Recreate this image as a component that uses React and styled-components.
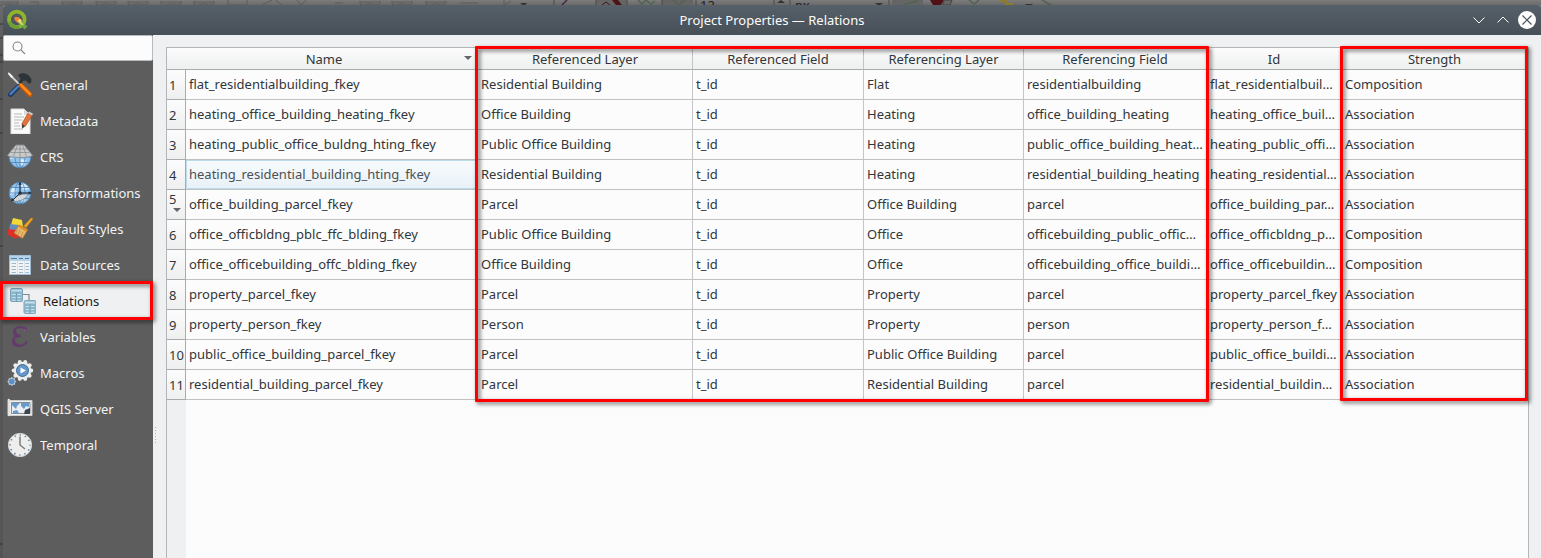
import React from "react";
import styled, { createGlobalStyle, css } from "styled-components";

const Global = createGlobalStyle`
  * { box-sizing: border-box; }
  html, body { margin: 0; height: 558px; overflow: hidden; }
  body { font: 13px/18px "Noto Sans", sans-serif; color: #31363b; background: #6f6f6f; }
`;

const Screen = styled.div`
  position: relative;
  width: 1541px;
  height: 558px;
  padding: 5px 0 0 3px;
  overflow: hidden;
  background: linear-gradient(#7c7c7c 0, #6a6a6a 5px, #555 60px, #555 558px);
`;
const Backdrop = styled.svg`
  position: absolute;
  left: 0;
  top: 0;
  width: 1541px;
  height: 558px;
`;
const Dialog = styled.div`
  position: relative;
  display: flex;
  flex-direction: column;
  height: 553px;
  border-radius: 3px 3px 0 0;
  overflow: hidden;
  background: #eff0f1;
`;
const TitleBar = styled.header`
  display: flex;
  align-items: center;
  flex: 0 0 30px;
  padding: 0 5px 0 3px;
  color: #fcfcfc;
  background: linear-gradient(#566069, #475057);
`;
const Title = styled.h1`
  flex: 1;
  margin: 0;
  padding-left: 46px;
  font-size: 13px;
  font-weight: 400;
  text-align: center;
`;
const WindowButtons = styled.div`
  display: flex;
  gap: 6px;
  svg { display: block; width: 18px; height: 18px; }
`;
const Body = styled.div`
  display: flex;
  flex: 1;
  min-height: 0;
`;
const Sidebar = styled.nav`
  flex: 0 0 150px;
  background: #5d5d5d;
`;
const Search = styled.div`
  height: 26px;
  padding: 5px 8px;
  border: 1px solid #b9babb;
  border-radius: 2px;
  background: #fcfcfc;
  svg { display: block; width: 14px; height: 14px; }
`;
const NavList = styled.ul`
  margin: 6px 0 0;
  padding: 0;
  list-style: none;
`;
const NavItem = styled.li`
  display: flex;
  align-items: center;
  gap: 7px;
  height: 36px;
  padding-left: 4px;
  color: #f2f2f2;
  svg { flex: none; width: 26px; height: 26px; }
  ${(p) => p.$active && css`
    padding-left: 7px;
    color: #1b1e20;
    background: #eff0f1;
  `}
`;
const Splitter = styled.div`
  display: flex;
  flex: 0 0 13px;
  align-items: flex-start;
  padding: 392px 0 0 2px;
  &::before {
    content: "";
    width: 1px;
    height: 17px;
    background: repeating-linear-gradient(#b0b1b2 0 1px, transparent 1px 3px);
  }
`;
const TableFrame = styled.main`
  flex: 0 0 1363px;
  margin-top: 12px;
  border: 1px solid #b4b5b6;
  border-bottom: 0;
  background: linear-gradient(90deg, #eff0f1 19px, #fcfcfc 19px);
`;
const Row = styled.div`
  display: grid;
  grid-template-columns: 19px 292px 215px 171px 160px 183px 135px 186px;
  height: ${(p) => (p.$head ? 22 : 30)}px;
`;
const HeadCell = styled.div`
  position: relative;
  padding: 2px ${(p) => (p.$sorted ? 15 : 0)}px 0 0;
  text-align: center;
  border-right: ${(p) => (p.$corner ? 0 : 1)}px solid #c3c4c5;
  border-bottom: 1px solid #aaabac;
  background: linear-gradient(#fcfcfc, #eeefef);
`;
const arrow = css`
  content: "";
  position: absolute;
  border: 4px solid transparent;
  border-top-color: #62666a;
  border-bottom: 0;
`;
const SortArrow = styled.span`
  ${arrow}
  right: 5px;
  top: 8px;
`;
const RowNumber = styled.div`
  position: relative;
  padding: ${(p) => (p.$open ? 0 : 6)}px 0 0 2px;
  border-right: 1px solid #aaabac;
  border-bottom: 1px solid #aaabac;
  background: linear-gradient(#fcfcfc, #eeefef);
  ${(p) => p.$open && css`
    &::after { ${arrow} left: 6px; top: 18px; }
  `}
`;
const Cell = styled.div`
  padding: 5px 3px 0;
  white-space: nowrap;
  overflow: hidden;
  border-right: 1px solid #c4c5c6;
  border-bottom: 1px solid #c0c1c2;
  background: #fcfcfc;
  ${(p) => p.$focus && css`
    color: #4b5054;
    background: linear-gradient(#f8fbfd, #e8f1f8);
    box-shadow: inset 1px 1px #bcdcec, inset 0 -1px #bcdcec;
  `}
`;
const Highlight = styled.div`
  position: absolute;
  left: ${(p) => p.$x}px;
  top: ${(p) => p.$y}px;
  width: ${(p) => p.$w}px;
  height: ${(p) => p.$h}px;
  border: 3px solid #fe0000;
  border-radius: 1px;
  filter: drop-shadow(2px 2px 2px rgba(0, 0, 0, 0.6));
`;

const Logo = () => (
  <svg width="22" height="22" viewBox="0 0 22 22">
    <circle cx="10.800" cy="10.400" r="7.800" fill="none" stroke="#8fb62a" strokeWidth="3.800" />
    <path d="M3.200 12.500a8 8 0 0 0 10 5.500" fill="none" stroke="#6b9f35" strokeWidth="3.400" />
    <path d="M12 11l8 8" stroke="#6da544" strokeWidth="4" />
    <path d="M12 11l5 5" stroke="#c6d96c" strokeWidth="2.400" />
    <path d="M8.500 8h4l2.500 3-3 3-3.500-3z" fill="#ef8337" />
    <path d="M11.500 12l2.500-2.500 1.800 2.300-2 1.800z" fill="#f8dc72" />
  </svg>
);

const gear = (cx, cy, r, n) =>
  Array.from({ length: n }, (_, i) => {
    const a = (i / n) * Math.PI * 2;
    return <circle key={i} cx={cx + r * Math.cos(a)} cy={cy + r * Math.sin(a)} r={r * 0.23} />;
  });

const Globe = ({ children }) => (
  <svg viewBox="0 0 26 26">
    <circle cx="13" cy="13" r="10.800" fill="#93c4ee" stroke="#4f86ba" strokeWidth=".8" />
    <path d="M5 8c4-1 5 1 4 4s-4 2-6 3M14 3c4 0 7 4 8 6l-5 1-3-3zM13 15l6 1-2 6-4-2z" fill="#d9eefc" />
    <g fill="none" stroke="#4c82b6" strokeWidth=".8">
      <ellipse cx="13" cy="13" rx="5" ry="11" />
      <path d="M13 2v22M2 13h22M4 7.500h18M4 18.500h18" />
    </g>
    {children}
  </svg>
);

const icons = {
  General: (
    <svg viewBox="0 0 26 26">
      <path d="M2 2l12 12" stroke="#cfd1d2" strokeWidth="1.800" />
      <path d="M.8 1.200l1-1 4.500 4.300-1.800 1.800z" fill="#f0f0f0" />
      <path d="M11 3c5-3.500 11-1.500 13.500 4.500l-.5 3.500-2.500.5-2.500-3-3 .5-2 3.500-2.500-2 2-4z" fill="#2d3437" />
      <path d="M3.500 22.500l8-8" stroke="#1d3d66" strokeWidth="5" strokeLinecap="round" />
      <path d="M3.500 22l8-8" stroke="#4b80bf" strokeWidth="2.400" strokeLinecap="round" />
      <path d="M14 13.500l9 9" stroke="#c65308" strokeWidth="4.800" strokeLinecap="round" />
      <path d="M14 13l9 9" stroke="#ff8b1d" strokeWidth="2.600" strokeLinecap="round" />
    </svg>
  ),
  Metadata: (
    <svg viewBox="0 0 26 26">
      <path d="M4 1h13l6 6v19H4z" fill="#fafafa" stroke="#dcdcdc" />
      <path d="M17 1v6h6z" fill="#d9dada" />
      <path d="M7 6h8M7 9h10M7 12h8M7 15h5M7 18h6M7 21h9" stroke="#b9b9b9" />
      <path d="M21 5l4 2.500-6 10-3.500 2.500-.5-4.500z" fill="#e0743a" stroke="#b0562a" strokeWidth=".7" />
      <path d="M21 5l1-1.500 4 2.300-1 1.700z" fill="#d0d0d0" />
      <path d="M15 16l3 2-3 2.500z" fill="#454545" />
    </svg>
  ),
  CRS: (
    <Globe>
      <path d="M9 1h8l8.500 10.500c-4 2.600-21 2.600-25 0z" fill="#c9cbca" stroke="#8a8e8f" strokeWidth=".8" />
      <path d="M10.500 1L6.500 12.500M13 1v12M15.500 1l4 11.500M6 5h14M3.500 8.500h19" fill="none" stroke="#8b8f90" strokeWidth=".8" />
    </Globe>
  ),
  Transformations: (
    <Globe>
      <path d="M5 21.500c3-5 8-8 16-7.500-2 5-8 8-16 7.500z" fill="#d2d8da" stroke="#707d82" strokeWidth=".7" />
      <path d="M13 13V4M13 13h9M13 13l-7 7" stroke="#26313a" />
      <path d="M13 1.200l1.700 3.500h-3.400zM25 13l-3.500 1.700v-3.400zM4 21.500l.8-3.500 2.700 2.700z" fill="#26313a" />
      <circle cx="13" cy="13" r="1.700" fill="#26313a" />
    </Globe>
  ),
  "Default Styles": (
    <svg viewBox="0 0 26 26">
      <path d="M6 2l9 2 1 7-12-2z" fill="#f4d836" />
      <path d="M3 8l9 1 1 6-11 0z" fill="#628fbd" />
      <path d="M1 13l8 1 4 7-5 1.500-7.500-4z" fill="#e02f2b" />
      <path d="M16.500 10l7-7.500q2-1.500 2.500.5l-7 9z" fill="#eca72c" stroke="#a46516" strokeWidth=".5" />
      <path d="M11.500 9.500l8.500 5.500-4.500 7.500-8.500-5.500z" fill="#e7b76b" stroke="#a9742c" strokeWidth=".7" />
      <path d="M12.500 8.500l8.500 5-1.500 2.500-8.500-5.500z" fill="#d98f28" />
      <path d="M10.500 13l-1.500 4M13 14l-2 5M16 16l-2 5" stroke="#b98443" strokeWidth=".7" />
    </svg>
  ),
  "Data Sources": (
    <svg viewBox="0 0 26 26">
      <path d="M2.500 3.500h21v19h-21z" fill="#f1f3f4" stroke="#9fbcd2" />
      <path d="M3 4h20v5H3z" fill="#b3d3eb" />
      <path d="M4 6.500h6M12 6.500h4M18 6.500h4" stroke="#557b99" />
      <path d="M4.500 11.500h4.500M4.500 14.500h4.500M4.500 17.500h4.500M4.500 20.500h4.500M12 11.500h4M12 14.500h4M12 17.500h4M12 20.500h4M18.500 11.500h3.500M18.500 14.500h3.500M18.500 17.500h3.500M18.500 20.500h3.500" stroke="#9db9cc" />
      <path d="M10.500 9v13M17.500 9v13" stroke="#d3dade" strokeWidth=".7" />
    </svg>
  ),
  Relations: (
    <svg viewBox="0 0 26 26">
      <path d="M13 6.500h6v7" fill="none" stroke="#7e8a90" strokeWidth="1.200" />
      {[[0.5, 0.5], [14, 12.5]].map(([x, y]) => (
        <g key={x} transform={`translate(${x} ${y})`}>
          <rect width="12" height="13" rx="1.500" fill="#9cc3d7" stroke="#7ba3b8" />
          <path d="M1 2h10" stroke="#c4dfeb" strokeWidth="1.400" />
          <path d="M1 4.500h10M1 7.500h10M1 10.500h10M6 4v9" stroke="#6d9db6" strokeWidth=".8" />
          <path d="M2 6h3M7 6h3M2 9h3M7 9h3M2 11.800h3M7 11.800h3" stroke="#c6e0ec" strokeWidth="1.100" />
        </g>
      ))}
    </svg>
  ),
  Variables: (
    <svg viewBox="0 0 26 26">
      <path d="M18.800 8V4.500C14 2 7 3 7 7.800c0 3.200 3 4.200 7 4.200-5 0-8 1.500-8 5.200 0 6 8.500 6.300 13.500 1.600v-1.800" fill="none" stroke="#633c6c" strokeWidth="2" />
      <path d="M8 6c-.5 3.500 1.500 5.500 4.500 6M7 15.500c-.5 4 2.500 5.800 5.500 5.500" fill="none" stroke="#633c6c" strokeWidth="2.600" />
      <circle cx="18" cy="6.500" r="1.500" fill="#79517f" />
    </svg>
  ),
  Macros: (
    <svg viewBox="0 0 26 26">
      <g fill="#ededeb">
        <circle cx="15.500" cy="10.500" r="8.800" />
        {gear(15.5, 10.5, 8.8, 10)}
      </g>
      <circle cx="15.500" cy="10.500" r="6" fill="#6596ca" stroke="#416a99" />
      <path d="M13.500 7.500l5.500 3-5.500 3z" fill="#fff" />
      <g fill="#c0d0df">
        <circle cx="4.800" cy="21.500" r="3.600" />
        {gear(4.8, 21.5, 3.6, 8)}
      </g>
      <circle cx="4.800" cy="21.500" r="2.800" fill="#5d8fc5" />
    </svg>
  ),
  "QGIS Server": (
    <svg viewBox="0 0 26 26">
      <path d="M2 4.500h23v15H2z" fill="#eeefee" stroke="#cccdce" />
      <path d="M1.800 4v15" stroke="#e1e1df" strokeWidth="2.500" strokeLinecap="round" />
      <path d="M4.500 6.500h18.500v11H4.500z" fill="#e9eff5" stroke="#6b747b" strokeWidth=".8" />
      <path d="M5 7h8l-3 3-1 3-4-4zM14 7h8v4l-3-1-2 3-3-3zM6 15l4-1 2 3H6z" fill="#689acb" />
      <path d="M17 18l1-4 5-2v6z" fill="#3e464d" />
    </svg>
  ),
  Temporal: (
    <svg viewBox="0 0 26 26">
      <circle cx="13" cy="13" r="11.600" fill="#eeeeec" stroke="#d5d7d6" />
      <circle cx="13" cy="13" r="10" fill="none" stroke="#6488ad" strokeWidth="1.600" strokeDasharray="1.400 3.836" strokeDashoffset=".7" />
      <path d="M13 4.500V13l5 4" fill="none" stroke="#7d7d7b" strokeWidth="1.500" />
    </svg>
  ),
};

const columns = ["Name", "Referenced Layer", "Referenced Field", "Referencing Layer", "Referencing Field", "Id", "Strength"];
const rows = [
  ["flat_residentialbuilding_fkey", "Residential Building", "t_id", "Flat", "residentialbuilding", "flat_residentialbuil…", "Composition"],
  ["heating_office_building_heating_fkey", "Office Building", "t_id", "Heating", "office_building_heating", "heating_office_buil…", "Association"],
  ["heating_public_office_buldng_hting_fkey", "Public Office Building", "t_id", "Heating", "public_office_building_heat…", "heating_public_offi…", "Association"],
  ["heating_residential_building_hting_fkey", "Residential Building", "t_id", "Heating", "residential_building_heating", "heating_residential…", "Association"],
  ["office_building_parcel_fkey", "Parcel", "t_id", "Office Building", "parcel", "office_building_par…", "Association"],
  ["office_officbldng_pblc_ffc_blding_fkey", "Public Office Building", "t_id", "Office", "officebuilding_public_offic…", "office_officbldng_p…", "Composition"],
  ["office_officebuilding_offc_blding_fkey", "Office Building", "t_id", "Office", "officebuilding_office_buildi…", "office_officebuildin…", "Composition"],
  ["property_parcel_fkey", "Parcel", "t_id", "Property", "parcel", "property_parcel_fkey", "Association"],
  ["property_person_fkey", "Person", "t_id", "Property", "person", "property_person_f…", "Association"],
  ["public_office_building_parcel_fkey", "Parcel", "t_id", "Public Office Building", "parcel", "public_office_buildi…", "Association"],
  ["residential_building_parcel_fkey", "Parcel", "t_id", "Residential Building", "parcel", "residential_buildin…", "Association"],
];

const DimmedWindow = () => (
  <Backdrop viewBox="0 0 1541 558">
    <g fill="#6a6a6a" stroke="#5c5c5c">
      {[8, 72, 106, 138, 171, 204, 370, 402, 436].map((x) => (
        <path key={x} d={`M${x - 10} 1q-1 6 6 4q4-3 8 0q7 1 6-4`} />
      ))}
    </g>
    <path d="M30 2l8 0 0 4M228 0v5h19V0M262 5l12-6 8 6M297 0l4 5 5-5M335 3h8M460 3h18M504 0v5l7-4" fill="none" stroke="#5c5c5c" />
    <path d="M596 0h31v5h-31zM662 0h31v5h-31zM892 0h31v5h-31z" fill="#656565" />
    <path d="M554 0v5M596 0v5M627 0v5M662 0v5M696 0v5M774 0v5M790 0v5M889 0v5" stroke="#4a4a4a" />
    <path d="M562 5l5-5" stroke="#4a2340" strokeWidth="1.500" />
    <path d="M602 5l4-3 4 3" fill="none" stroke="#401318" />
    <path d="M612 0h6l4 5h-6zM930 0h14l-3 5h-8z" fill="#4f1115" />
    <path d="M944 0h8l-2 5h-7z" fill="#666" stroke="#444" />
    <path d="M638 0l4 4 4-4 5 4 4-3M673 0l6 5 6-5M903 5l14-4M969 0l5 4 5-4M1042 0l9 5" fill="none" stroke="#53634f" strokeWidth="1.500" />
    <path d="M1000 1h6v3h7" fill="none" stroke="#8a7c35" strokeWidth="2.500" />
    <path d="M777 3l4-3 4 3zM875 3h8l-4 3zM1025 4h8l-4 3zM520 3h7l-3 3z" fill="#333" />
    <g fill="#222">
      <text x="700" y="10">12</text>
      <text x="795" y="10">px</text>
    </g>
    <path d="M0 24h3M0 38h3M0 55h3M0 62h3M0 99h3M0 133h3M0 246h3M0 544h3" stroke="#333" />
  </Backdrop>
);

export default function App() {
  return (
    <Screen>
      <Global />
      <DimmedWindow />
      <Dialog>
        <TitleBar>
          <Logo />
          <Title>Project Properties — Relations</Title>
          <WindowButtons>
            <svg viewBox="0 0 18 18"><path d="M3.500 6.500L9 12l5.500-5.500" fill="none" stroke="#fcfcfc" /></svg>
            <svg viewBox="0 0 18 18"><path d="M3.500 11.500L9 6l5.500 5.500" fill="none" stroke="#fcfcfc" /></svg>
            <svg viewBox="0 0 18 18"><circle cx="9" cy="9" r="9" fill="#fcfcfc" /><path d="M4.500 4.500l9 9M13.500 4.500l-9 9" stroke="#475057" strokeWidth="1.200" /></svg>
          </WindowButtons>
        </TitleBar>
        <Body>
          <Sidebar>
            <Search>
              <svg viewBox="0 0 14 14" fill="none" stroke="#7f8284" strokeWidth="1.100"><circle cx="5.500" cy="5.500" r="4.500" /><path d="M8.700 8.700L13 13" /></svg>
            </Search>
            <NavList>
              {Object.entries(icons).map(([name, icon]) => (
                <NavItem key={name} $active={name === "Relations"}>{icon}{name}</NavItem>
              ))}
            </NavList>
          </Sidebar>
          <Splitter />
          <TableFrame>
            <Row $head>
              <HeadCell $corner />
              {columns.map((c, i) => (
                <HeadCell key={c} $sorted={i === 0}>{c}{i === 0 && <SortArrow />}</HeadCell>
              ))}
            </Row>
            {rows.map((r, i) => (
              <Row key={r[0]}>
                <RowNumber $open={i === 4}>{i + 1}</RowNumber>
                {r.map((v, j) => (
                  <Cell key={j} $focus={i === 3 && j === 0}>{v}</Cell>
                ))}
              </Row>
            ))}
          </TableFrame>
        </Body>
      </Dialog>
      <Highlight $x={0} $y={281} $w={153} $h={39} />
      <Highlight $x={475} $y={46} $w={734} $h={356} />
      <Highlight $x={1340} $y={46} $w={188} $h={355} />
    </Screen>
  );
}
